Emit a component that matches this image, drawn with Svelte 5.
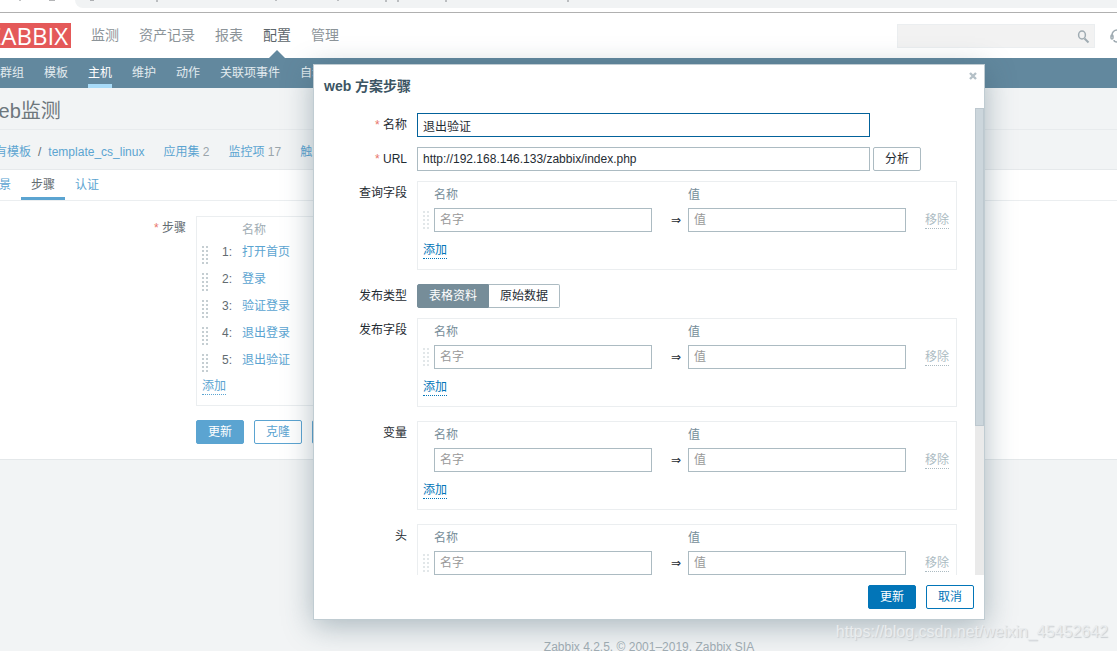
<script>
  const mainMenu = ['监测', '资产记录', '报表', '配置', '管理'];
  const subMenu = ['主机群组', '模板', '主机', '维护', '动作', '关联项事件', '自动发现'];
  const steps = ['打开首页', '登录', '验证登录', '退出登录', '退出验证'];

  let name = $state('退出验证');
  let url = $state('http://192.168.146.133/zabbix/index.php');
  let postType = $state('form');
</script>

{#snippet dots()}
  <svg class="dots" width="6" height="18" viewBox="0 0 6 18" aria-hidden="true">
    {#each [0, 4, 8, 12, 16] as y}
      <rect x="0" {y} width="2" height="2" /><rect x="4" {y} width="2" height="2" />
    {/each}
  </svg>
{/snippet}

{#snippet pairs(id, label, sortable)}
  <div class="row spaced">
    <div class="label" id="{id}-label">{label}</div>
    <div class="box pairs">
      <table aria-labelledby="{id}-label">
        <thead>
          <tr><th class="c-drag"></th><th>名称</th><th class="c-arrow"></th><th>值</th><th class="c-remove"></th></tr>
        </thead>
        <tbody>
          <tr>
            <td>{#if sortable}{@render dots()}{/if}</td>
            <td><input type="text" placeholder="名字" aria-label="名称" /></td>
            <td class="arrow">⇒</td>
            <td><input type="text" placeholder="值" aria-label="值" /></td>
            <td class="remove"><button class="link" disabled>移除</button></td>
          </tr>
        </tbody>
      </table>
      <button class="link add">添加</button>
    </div>
  </div>
{/snippet}

<div class="screen">
  <div class="chrome">
    <svg width="700" height="3" viewBox="0 0 700 3" aria-hidden="true">
      <path d="M20 0v1M157 0v2M276 0v1M338 0v1M386 0v2M398 0v2M446 0v2M568 0v2" />
      <path class="dark" d="M49 0h6M90 0h4" />
    </svg>
    <div class="address"></div>
  </div>

  <div class="page">
    <header>
      <a class="logo" href="#home">ZABBIX</a>
      <nav class="main-menu">
        {#each mainMenu as item}
          <a href="#menu" class:active={item === '配置'}>{item}</a>
        {/each}
      </nav>
      <div class="search">
        <input type="text" aria-label="搜索" />
        <button aria-label="搜索">
          <svg width="14" height="14" viewBox="0 0 14 14"><ellipse cx="5" cy="5" rx="3.4" ry="4" /><path d="M7.5 8.5l4 4" stroke-width="2" /></svg>
        </button>
      </div>
      <a class="support" href="#support" aria-label="支持">
        <svg width="14" height="14" viewBox="0 0 14 14"><path d="M2 8V6a5 5 0 0 1 10 0v2M4 11q0 2 3 2" /><rect x="1" y="6" width="2" height="4" rx="1" /><rect x="11" y="6" width="2" height="4" rx="1" /></svg>
      </a>
    </header>

    <nav class="sub-menu">
      {#each subMenu as item}
        <a href="#sub" class:active={item === '主机'}>{item}</a>
      {/each}
    </nav>

    <h1>Web监测</h1>

    <div class="crumbs">
      <span class="path"><a href="#all">所有模板</a><span>/</span><a href="#tpl">template_cs_linux</a></span>
      <span><a href="#apps">应用集</a> <sup>2</sup></span>
      <span><a href="#items">监控项</a> <sup>17</sup></span>
      <span><a href="#triggers">触发器</a></span>
    </div>

    <main>
      <div class="tabs">
        <a href="#scenario">场景</a>
        <a href="#steps" class="active">步骤</a>
        <a href="#auth">认证</a>
      </div>
      <div class="steps-form">
        <div class="label"><span class="star">*</span> 步骤</div>
        <div>
          <div class="box steps">
            <table>
              <thead><tr><th></th><th></th><th>名称</th></tr></thead>
              <tbody>
                {#each steps as step, i}
                  <tr>
                    <td class="drag">{@render dots()}</td>
                    <td class="num">{i + 1}:</td>
                    <td><a href="#step">{step}</a></td>
                  </tr>
                {/each}
              </tbody>
            </table>
            <button class="link">添加</button>
          </div>
          <div class="actions">
            <button class="btn primary">更新</button>
            <button class="btn">克隆</button>
            <button class="btn">删除</button>
          </div>
        </div>
      </div>
    </main>

    <footer>Zabbix 4.2.5. © 2001–2019, <a href="#sia">Zabbix SIA</a></footer>

    <div class="dialog" role="dialog" aria-labelledby="dialog-title">
      <button class="close" aria-label="关闭">
        <svg width="8" height="8" viewBox="0 0 8 8"><path d="M1 1l6 6M7 1l-6 6" /></svg>
      </button>
      <h4 id="dialog-title">web 方案步骤</h4>
      <div class="body">
        <div class="fields">
          <div class="row">
            <label class="label" for="name"><span class="star">*</span> 名称</label>
            <div class="wide focused"><input id="name" type="text" bind:value={name} /></div>
          </div>
          <div class="row">
            <label class="label" for="url"><span class="star">*</span> URL</label>
            <div class="wide"><input id="url" type="text" bind:value={url} /></div>
            <button class="btn grey">分析</button>
          </div>
          {@render pairs('query', '查询字段', true)}
          <div class="row">
            <div class="label">发布类型</div>
            <div class="radios">
              <label class:checked={postType === 'form'}><input type="radio" value="form" bind:group={postType} />表格资料</label>
              <label class:checked={postType === 'raw'}><input type="radio" value="raw" bind:group={postType} />原始数据</label>
            </div>
          </div>
          {@render pairs('post', '发布字段', true)}
          {@render pairs('vars', '变量', false)}
          {@render pairs('headers', '头', true)}
        </div>
        <div class="scrollbar"><div class="thumb"></div></div>
      </div>
      <div class="dialog-footer">
        <button class="btn primary">更新</button>
        <button class="btn">取消</button>
      </div>
    </div>
  </div>

  <div class="watermark">https://blog.csdn.net/weixin_45452642</div>
</div>

<style>
  :global(body) { background: #f2f4f5; }
  .screen {
    --crop-left: 30px;
    --crop-right: 211px;
    position: relative;
    height: 100vh;
    overflow: hidden;
    font: 12px/16px "Liberation Sans", "Noto Sans CJK SC", sans-serif;
    color: #626b70;
  }
  .screen * { box-sizing: border-box; }
  a { color: #5ba4d1; text-decoration: none; }
  button, input { font: inherit; margin: 0; }
  button { cursor: pointer; }

  .chrome { height: 13px; background: #fff; border-bottom: 1px solid #b0b0b0; }
  .chrome svg { position: absolute; fill: none; stroke: #85888c; }
  .chrome .dark { stroke: #6a6d71; }
  .address { height: 8px; margin-left: 75px; background: #f1f3f4; border-bottom-left-radius: 12px; }

  /* the page is wider than the window and runs past both of its sides */
  .page { position: relative; margin: 0 calc(-1 * var(--crop-right)) 0 calc(-1 * var(--crop-left)); }

  header { display: flex; align-items: center; height: 45px; padding: 0 var(--crop-right) 0 4px; background: #fff; }
  .logo {
    display: flex; justify-content: flex-end;
    width: 97px; height: 25px; padding-right: 3px;
    background: #e45959; color: #fff;
    font: 24px/25px "Open Sans", sans-serif;
  }
  .main-menu { display: flex; gap: 20px; flex: 1; margin-left: 20px; font-size: 14px; line-height: 45px; }
  .main-menu a { position: relative; color: #8c9499; }
  .main-menu .active { color: #5d666b; }
  .main-menu .active::after {
    content: ""; position: absolute; left: 6px; bottom: 0;
    border: 8px solid transparent; border-top: 0; border-bottom-color: #62889e;
  }
  .search { display: flex; width: 198px; height: 24px; background: #f2f2f2; border: 1px solid #ebeef0; }
  .search input { flex: 1; min-width: 0; border: 0; background: none; }
  .search button { display: flex; padding: 5px 3px; border: 0; background: none; }
  header svg { fill: none; stroke: #9fabb2; stroke-width: 1.5; }
  .support { width: 7px; height: 14px; margin-left: 15px; overflow: hidden; }

  .sub-menu { display: flex; gap: 20px; height: 30px; padding-left: 6px; background: #62889e; line-height: 30px; }
  .sub-menu a { color: #e3ebef; }
  .sub-menu .active { color: #fff; border-bottom: 4px solid #a8dbf8; }

  h1 { margin: 0; height: 42px; padding-left: 10px; font-size: 20px; line-height: 46px; font-weight: 400; color: #6e777c; border-bottom: 1px solid #e8ebed; }
  .crumbs { display: flex; gap: 19px; height: 40px; padding-left: 13px; line-height: 44px; border-bottom: 1px solid #e6e9eb; }
  .path { display: flex; gap: 7px; }
  .crumbs sup { font-size: 12px; vertical-align: baseline; line-height: 1; color: #9aa5ab; }

  main { background: #fff; border-bottom: 1px solid #e4e8ea; }
  .tabs { display: flex; height: 31px; padding-left: 7px; line-height: 30px; border-bottom: 1px solid #ebeef0; }
  .tabs a { padding: 0 10px; }
  .tabs .active { color: #626b70; border-bottom: 3px solid #5ba4d1; }
  .steps-form { display: flex; gap: 10px; padding: 15px 0; }
  .steps-form .label { width: 216px; }
  .label { text-align: right; line-height: 24px; flex: none; }
  .star { color: #e8746c; }

  .box { border: 1px solid #ebeef0; }
  table { border-collapse: collapse; }
  th { padding: 0; font-weight: 400; text-align: left; color: #768d99; }
  td { padding: 0; }
  .steps { width: 600px; padding: 5px 5px 10px; }
  .steps th { color: #a1adb4; }
  .steps td { height: 27px; }
  .steps .drag { width: 16px; padding-top: 7px; }
  .steps .num { width: 24px; padding-right: 10px; text-align: right; }
  .steps .link { display: block; margin-top: 5px; }
  .dots { display: block; fill: #c5ced2; }
  .actions { display: flex; gap: 10px; margin-top: 14px; }

  .btn {
    height: 24px; padding: 0 11px; line-height: 22px;
    border: 1px solid #5ba4d1; border-radius: 2px; background: #fff; color: #5ba4d1;
  }
  .btn.primary { background: #5ba4d1; color: #fff; }
  .link { padding: 0; border: 0; border-bottom: 1px dotted; background: none; color: #5ba4d1; line-height: 16px; }

  footer { margin-top: 179px; text-align: center; color: #a1adb4; }
  footer a { color: inherit; }

  .dialog {
    position: absolute; top: 51px; left: 50%;
    transform: translateX(-50%);
    display: flex; flex-direction: column;
    width: 672px; height: calc(100vh - 95px);
    background: #fff; border: 1px solid #c0ccd2; color: #1f2c33;
    box-shadow: 0 6px 28px rgba(60, 90, 105, 0.4);
  }
  .close { position: absolute; top: 7px; right: 7px; display: flex; padding: 0; border: 0; background: none; }
  .close svg { fill: none; stroke: #b4c0c7; stroke-width: 2.4; }
  h4 { margin: 0; padding: 11px 10px 12px; font-size: 14px; line-height: 20px; color: #3c5563; }
  .body { display: flex; flex: 1; min-height: 0; overflow: hidden; }
  .fields { flex: 1; padding: 5px 18px 0 10px; }
  .row { display: flex; margin-bottom: 10px; }
  .row > .label { width: 83px; margin-right: 10px; }
  .row.spaced { margin-bottom: 14px; }
  input[type="text"] { color: #1f2c33; outline: 0; }
  .fields input[type="text"] { display: block; width: 100%; height: 24px; padding: 0 5px; border: 1px solid #acbbc2; background: #fff; }
  .wide { width: 453px; }
  .fields .focused input[type="text"] { border-color: #03629b; }
  .fields input::placeholder { color: #999; }
  .fields .grey { margin-left: 3px; border-color: #acbbc2; color: #1f2c33; }
  .pairs { flex: 1; padding: 5px 7px 10px 5px; }
  .pairs table { width: 100%; table-layout: fixed; }
  .pairs th { height: 21px; vertical-align: top; }
  .c-drag { width: 11px; }
  .c-arrow { width: 36px; }
  .c-remove { width: 43px; }
  .pairs .dots { fill: #e2e7e9; }
  .arrow { padding-left: 12px; text-align: center; font-family: "DejaVu Sans", sans-serif; }
  .remove { text-align: right; }
  .remove .link { color: #acbbc2; }
  .add { display: block; margin-top: 10px; color: #0275b8; }

  .radios { display: flex; }
  .radios label { height: 24px; padding: 0 11px; border: 1px solid #acbbc2; border-left: 0; border-radius: 0 2px 2px 0; line-height: 22px; }
  .radios label:first-child { border-left: 1px solid #acbbc2; border-radius: 2px 0 0 2px; }
  .radios label.checked { background: #768d99; border-color: #768d99; color: #fff; }
  .radios input { position: absolute; opacity: 0; }
  .scrollbar { width: 9px; background: #eaeaea; }
  .thumb { height: 68%; background: #ccd6dc; border: 1px solid #bdc8cf; }
  .dialog-footer { display: flex; justify-content: flex-end; gap: 10px; padding: 10px; }
  .dialog .btn:not(.grey) { border-color: #0275b8; color: #0275b8; }
  .dialog .btn.primary { background: #0275b8; color: #fff; }

  .watermark {
    position: absolute; right: 9px; bottom: 9px;
    font-size: 16px; line-height: 20px; color: #e9ecee;
    text-shadow: 1px 1px 1px #c8cdd0;
  }
</style>
